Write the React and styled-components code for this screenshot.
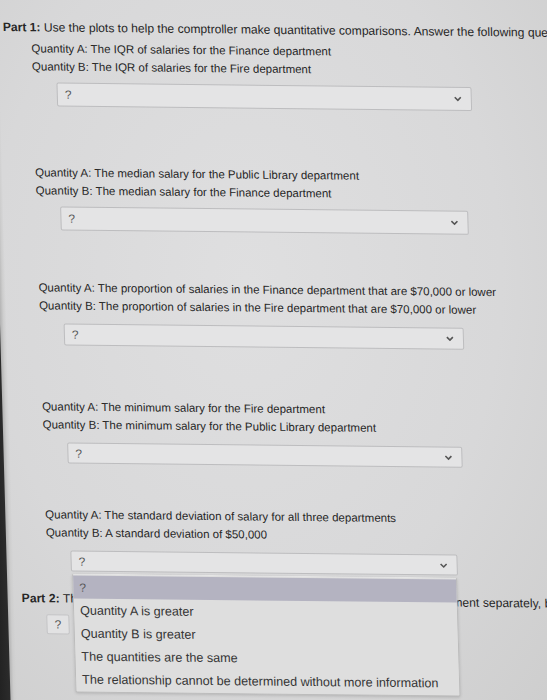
import React from "react";
import styled, { createGlobalStyle } from "styled-components";

const GlobalStyle = createGlobalStyle`
  html, body {
    margin: 0;
    padding: 0;
  }
  body {
    font-family: "Liberation Sans", Arial, sans-serif;
    color: #262626;
  }
`;

const Screen = styled.div`
  width: 547px;
  height: 700px;
  overflow: hidden;
  background:
    linear-gradient(88.4deg, #222 0, #2b2b2b 10px, #b5b5b5 11px, #cdcdcd 14px, transparent 17px),
    radial-gradient(ellipse at 45% 40%, #dfdfe0 0%, #d8d8d9 60%, #cecece 100%);
`;

// the photo is taken at a slight angle
const Sheet = styled.div`
  transform: skew(1.7deg, 0.6deg);
  transform-origin: 0 0;
  padding-top: 19px;
`;

const PartLine = styled.div`
  margin-top: ${(p) => p.top || 0}px;
  padding-left: ${(p) => p.indent}px;
  font-size: 12.1px;
  line-height: 16px;
  word-spacing: ${(p) => p.spacing || 0}px;
  white-space: nowrap;

  b {
    font-weight: bold;
  }
`;

const Block = styled.div`
  margin-top: ${(p) => p.top}px;
`;

const Question = styled.div`
  padding-left: 30px;
  font-size: 11.5px;
  line-height: 17.5px;
  white-space: nowrap;
`;

const SelectWrap = styled.div`
  position: relative;
  margin-left: 54px;
  margin-top: ${(p) => p.gap}px;
  width: ${(p) => p.width}px;
`;

const SelectBox = styled.div`
  height: ${(p) => p.height}px;
  box-sizing: border-box;
  border: 1px solid #bdbdbf;
  border-radius: 2px;
  background: #e4e4e5;
  display: flex;
  align-items: center;
  justify-content: space-between;
  padding: 0 9px 0 7px;
  font-size: 12px;
  color: #555;
`;

const Chevron = () => (
  <svg width="8" height="6" viewBox="0 0 8 6">
    <polyline points="1,1.5 4,4.5 7,1.5" fill="none" stroke="#555" strokeWidth="1.6" />
  </svg>
);

const Menu = styled.div`
  position: absolute;
  top: calc(100% + 2px);
  left: 1px;
  right: 1px;
  z-index: 2;
  background: #dedede;
  border: 1px solid #bcbcbc;
  border-top-color: #e6e6e6;
  border-radius: 2px;
  box-shadow: 0 1px 3px rgba(0, 0, 0, 0.15);
  padding-top: 1px;
  padding-bottom: 1px;
`;

const MenuItem = styled.div`
  height: 23px;
  display: flex;
  align-items: center;
  padding: 0 6px;
  background: ${(p) => (p.active ? "#b4b3c1" : "transparent")};
  font-size: ${(p) => (p.active ? 12 : 12.6)}px;
  color: ${(p) => (p.active ? "#555" : "#353535")};
  white-space: nowrap;
`;

const SmallSelect = styled.div`
  margin: 8px 0 0 28px;
  width: 23px;
  height: 20px;
  box-sizing: border-box;
  border: 1px solid #c4c4c6;
  border-radius: 2px;
  background: #e2e2e3;
  font-size: 12px;
  color: #555;
  display: flex;
  align-items: center;
  justify-content: center;
`;

const blocks = [
  {
    top: 5,
    gap: 7,
    height: 24,
    width: 415,
    a: "The IQR of salaries for the Finance department",
    b: "The IQR of salaries for the Fire department",
  },
  {
    top: 58,
    gap: 7,
    height: 24,
    width: 408,
    a: "The median salary for the Public Library department",
    b: "The median salary for the Finance department",
  },
  {
    top: 49,
    gap: 9,
    height: 22,
    width: 400,
    a: "The proportion of salaries in the Finance department that are $70,000 or lower",
    b: "The proportion of salaries in the Fire department that are $70,000 or lower",
  },
  {
    top: 53,
    gap: 9,
    height: 21,
    width: 395,
    a: "The minimum salary for the Fire department",
    b: "The minimum salary for the Public Library department",
  },
  {
    top: 43,
    gap: 9,
    height: 21,
    width: 387,
    a: "The standard deviation of salary for all three departments",
    b: "A standard deviation of $50,000",
    open: true,
  },
];

const options = [
  "Quantity A is greater",
  "Quantity B is greater",
  "The quantities are the same",
  "The relationship cannot be determined without more information",
];

export default function App() {
  return (
    <Screen>
      <GlobalStyle />
      <Sheet>
        <PartLine indent={2}>
          <b>Part 1:</b> Use the plots to help the comptroller make quantitative comparisons. Answer the following questions.
        </PartLine>

        {blocks.map((q, i) => (
          <Block key={i} top={q.top}>
            <Question>Quantity A: {q.a}</Question>
            <Question>Quantity B: {q.b}</Question>
            <SelectWrap width={q.width} gap={q.gap}>
              <SelectBox height={q.height}>
                <span>?</span>
                <Chevron />
              </SelectBox>
              {q.open && (
                <Menu>
                  <MenuItem active>?</MenuItem>
                  {options.map((o) => (
                    <MenuItem key={o}>{o}</MenuItem>
                  ))}
                </Menu>
              )}
            </SelectWrap>
          </Block>
        ))}

        <PartLine indent={4} top={19} spacing={0.2}>
          <b>Part 2:</b> The comptroller would now like to compare the salary within each department separately, but
        </PartLine>
        <SmallSelect>?</SmallSelect>
      </Sheet>
    </Screen>
  );
}
